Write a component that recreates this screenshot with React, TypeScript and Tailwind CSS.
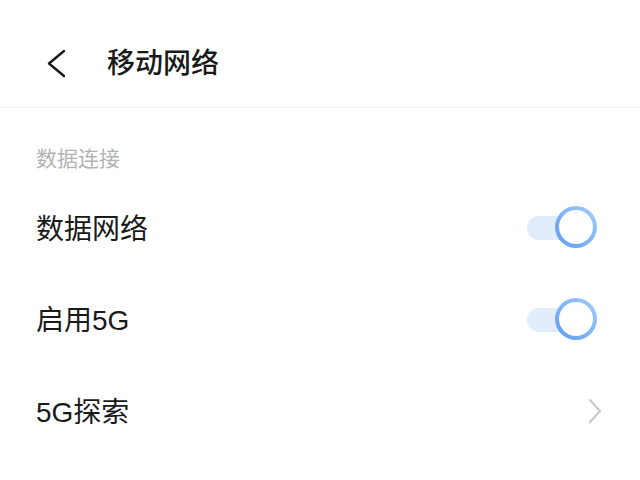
import React, { useState } from 'react';

const font = { fontFamily: '"Noto Sans CJK SC", "Noto Sans", sans-serif' };
const latin = { fontFamily: '"Liberation Sans", "Noto Sans CJK SC", sans-serif' };

const Toggle = ({ on, onClick }: { on: boolean; onClick: () => void }) => (
  <button onClick={onClick} className="relative w-[70px] h-[42px] shrink-0">
    <div className={`absolute left-0 top-[10px] w-[46px] h-[24px] rounded-full ${on ? 'bg-[#e2edfc]' : 'bg-[#e6e6e6]'}`} />
    <div
      className={`absolute top-0 ${on ? 'right-0' : 'left-0'} w-[42px] h-[42px] rounded-full p-[4px] bg-linear-to-bl from-[#a3cdf9] to-[#5d9cf0]`}
    >
      <div className="w-full h-full rounded-full bg-white" />
    </div>
  </button>
);

const App = () => {
  const [dataOn, setDataOn] = useState(true);
  const [fiveGOn, setFiveGOn] = useState(true);

  return (
    <div className="w-[640px] h-[480px] bg-white overflow-hidden" style={font}>
      {/* header */}
      <div className="h-[108px] pt-[14px] flex items-center border-b border-[#f3f3f3]">
        <svg className="ml-[46px] mt-[5px]" width="21" height="29" viewBox="0 0 21 29" fill="none">
          <path d="M18 2 L3 14.5 L18 27" stroke="#1a1a1a" strokeWidth="2.4" strokeLinecap="round" strokeLinejoin="round" />
        </svg>
        <h1 className="ml-[40px] text-[28px] font-medium text-[#1a1a1a] leading-none">移动网络</h1>
      </div>

      {/* section label */}
      <div className="pt-[36px] pb-[11px] px-[36px] text-[21px] leading-[26px] text-[#b3b3b3]">数据连接</div>

      <div className="h-[92px] flex items-center justify-between pl-[36px] pr-[43px]">
        <span className="text-[28px] text-[#1a1a1a]">数据网络</span>
        <Toggle on={dataOn} onClick={() => setDataOn(!dataOn)} />
      </div>
      <div className="h-[92px] flex items-center justify-between pl-[36px] pr-[43px]">
        <span className="text-[28px] text-[#1a1a1a]">
          启用<span style={latin}>5G</span>
        </span>
        <Toggle on={fiveGOn} onClick={() => setFiveGOn(!fiveGOn)} />
      </div>
      <div className="h-[92px] flex items-center justify-between pl-[36px] pr-[36px]">
        <span className="text-[28px] text-[#1a1a1a]">
          <span style={latin}>5G</span>探索
        </span>
        <svg width="18" height="26" viewBox="0 0 18 26" fill="none">
          <path d="M4 2 L14 13 L4 24" stroke="#c9c9c9" strokeWidth="2.2" strokeLinecap="round" strokeLinejoin="round" />
        </svg>
      </div>
    </div>
  );
};

export default App;
